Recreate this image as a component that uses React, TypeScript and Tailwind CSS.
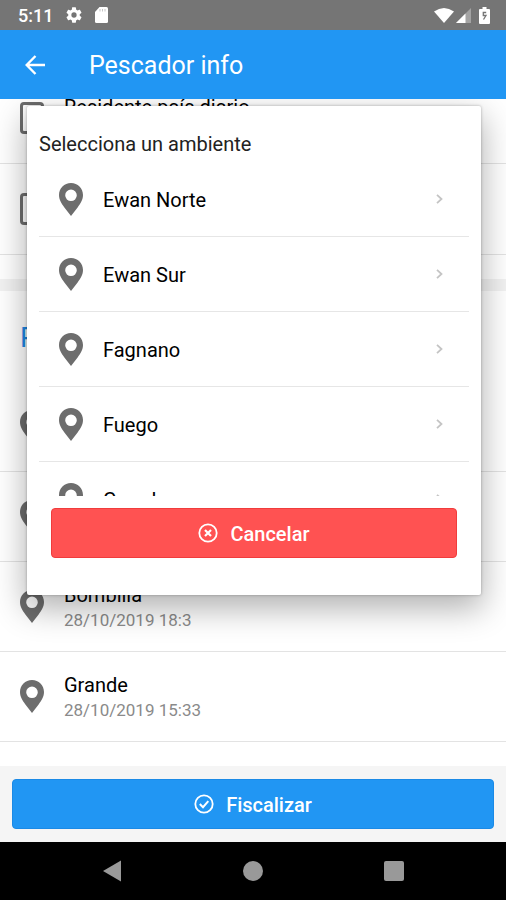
import React from 'react';

const places = ['Ewan Norte', 'Ewan Sur', 'Fagnano', 'Fuego', 'Grande'];

const visits = [
  { id: 1, name: '', date: '' },
  { id: 2, name: '', date: '' },
  { id: 3, name: 'Bombilla', date: '28/10/2019 18:3' },
  { id: 4, name: 'Grande', date: '28/10/2019 15:33' },
];

function Pin() {
  return (
    <svg viewBox="0 0 24 33" className="h-[33px] w-6 shrink-0 fill-[#6d6d6d]" aria-hidden="true">
      <path
        fillRule="evenodd"
        d="M12 0C5.2 0 0 5.3 0 12c0 5 2.600 8.400 5.200 12.200L12 33l6.800-8.800C21.400 20.400 24 17 24 12 24 5.300 18.800 0 12 0Zm0 6.500a5.800 5.800 0 1 1 0 11.600 5.800 5.800 0 0 1 0-11.600Z"
      />
    </svg>
  );
}

function StatusBar() {
  return (
    <div className="z-10 flex h-[30px] shrink-0 items-center justify-between bg-[#757575] pr-4 pl-[18px] text-white">
      <div className="flex items-center">
        <span className="w-[48px] pt-0.5 text-lg font-medium">5:11</span>
        <svg viewBox="2 2 20 20" className="h-4 w-4 fill-white" aria-hidden="true">
          <path d="M19.140 12.940c.04-.3.060-.61.060-.94s-.02-.64-.07-.94l2.030-1.580a.49.490 0 0 0 .12-.61l-1.920-3.320a.488.488 0 0 0-.59-.22l-2.390.96c-.5-.38-1.030-.7-1.620-.94l-.36-2.540a.484.484 0 0 0-.48-.41h-3.840c-.24 0-.43.170-.47.410l-.36 2.540c-.59.240-1.130.57-1.620.940l-2.390-.96c-.22-.08-.47 0-.59.220L2.740 8.870c-.12.210-.08.470.12.610l2.030 1.580c-.05.300-.09.630-.09.940s.02.640.07.940l-2.030 1.580a.49.490 0 0 0-.12.610l1.920 3.320c.12.220.37.290.59.220l2.390-.96c.5.380 1.030.7 1.620.940l.36 2.540c.05.240.24.410.48.410h3.840c.24 0 .44-.17.47-.41l.36-2.540c.59-.24 1.130-.56 1.620-.94l2.390.960c.22.080.47 0 .59-.22l1.920-3.320c.12-.22.070-.47-.12-.61l-2.010-1.580ZM12 15.300A3.300 3.300 0 1 1 12 8.700a3.300 3.300 0 0 1 0 6.600Z" />
        </svg>
        <svg viewBox="0 0 13 16" className="ml-[13px] h-4 w-[13px]" aria-hidden="true">
          <path d="M4.500 0H11.500Q13 0 13 1.500V14.500Q13 16 11.500 16H1.500Q0 16 0 14.500V5Z" fill="white" />
          <path d="M5 2v2.500M7.500 2v2.500M10 2v2.500" stroke="#c5c5c5" />
        </svg>
      </div>
      <div className="flex items-center">
        <svg viewBox="0 0 20 15" className="h-[15px] w-5" aria-hidden="true">
          <path d="M0 3.500Q10-3.500 20 3.500L10 15Z" fill="white" />
        </svg>
        <svg viewBox="0 0 15 15" className="ml-[2px] h-[15px] w-[15px]" aria-hidden="true">
          <path d="M0 15 15 0V15Z" fill="#a3a3a3" />
          <path d="M0 15 9.500 5.500V15Z" fill="white" />
        </svg>
        <svg viewBox="0 0 11 17" className="ml-2 h-[17px] w-[11px]" aria-hidden="true">
          <path d="M3.500 0h4v2H10q1 0 1 1v13q0 1-1 1H1q-1 0-1-1V3q0-1 1-1h2.500Z" fill="white" />
          <path d="M7.200 5.500H4.300V8.500H7L4.500 12.500" fill="none" stroke="#757575" strokeWidth="1.300" />
        </svg>
      </div>
    </div>
  );
}

export default function App() {
  return (
    <div className="flex h-screen flex-col overflow-hidden bg-white font-['Roboto',sans-serif] text-black">
      <StatusBar />
      <header className="z-10 flex h-[69px] shrink-0 items-center bg-[#2196f3] pl-[25px] text-white">
        <button type="button" aria-label="Volver" className="mr-[44px]">
          <svg viewBox="0 0 20 20" className="h-5 w-5" fill="none" stroke="white" strokeWidth="2.400" aria-hidden="true">
            <path d="M20 10H2M10.500 1 1.700 10l8.800 9" />
          </svg>
        </button>
        <h1 className="pt-0.5 text-[25px]">Pescador info</h1>
      </header>

      <div className="relative flex min-h-0 flex-1 flex-col">
        <main className="flex min-h-0 flex-1 flex-col justify-end overflow-hidden pb-6">
          <label className="flex h-[91px] shrink-0 items-center gap-5 border-b border-[#e3e3e3] px-5">
            <input type="checkbox" className="h-8 w-6 appearance-none rounded-sm border-[3px] border-[#6d6d6d]" />
            <span className="h-[46px] text-xl leading-[25px]">Residente país diario</span>
          </label>
          <div className="flex h-[91px] shrink-0 items-center border-b border-[#e3e3e3] px-5">
            <input
              type="checkbox"
              aria-label="Residente"
              className="h-8 w-6 appearance-none rounded-sm border-[3px] border-[#6d6d6d]"
            />
          </div>
          <div className="mt-6 h-3 shrink-0 bg-[#f2f2f2]" />
          <h2 className="flex h-[91px] shrink-0 items-center px-5 pt-0.5 text-[28px] text-[#1e88e5]">Pesca</h2>
          <ul>
            {visits.map((visit) => (
              <li key={visit.id} className="flex h-[90px] items-center gap-5 border-b border-[#e3e3e3] px-5">
                <Pin />
                <div className="pt-0.5">
                  <p className="text-xl leading-[25px]">{visit.name}</p>
                  <p className="text-[17px] leading-[25px] text-[#8a8a8a]">{visit.date}</p>
                </div>
              </li>
            ))}
          </ul>
        </main>

        <section
          role="dialog"
          aria-labelledby="dialog-title"
          className="absolute top-[7px] right-[25px] left-[27px] rounded-xs bg-white px-3 pt-[25px] pb-[37px] shadow-[0_0_3px_rgba(0,0,0,0.3),0_12px_32px_2px_rgba(0,0,0,0.3)]"
        >
          <h2 id="dialog-title" className="mb-[5px] text-xl leading-[26px] text-[#222]">
            Selecciona un ambiente
          </h2>
          <ul className="h-[334px] overflow-hidden">
            {places.map((place) => (
              <li key={place} className="border-b border-[#e6e6e6]">
                <button type="button" className="flex h-[74px] w-full items-center pr-[26px] pl-5 text-left text-xl">
                  <Pin />
                  <span className="ml-5 flex-1 pt-0.5">{place}</span>
                  <svg viewBox="0 0 7 10" className="h-[10px] w-[7px]" fill="none" stroke="#c4c4c4" strokeWidth="1.800" aria-hidden="true">
                    <path d="m1 .800 4.500 4.200L1 9.200" />
                  </svg>
                </button>
              </li>
            ))}
          </ul>
          <div className="px-3 pt-3">
            <button
              type="button"
              className="flex h-[50px] w-full items-center justify-center gap-3 rounded-sm border border-[#f03c3c] bg-[#ff5252] text-xl font-medium text-white"
            >
              <svg viewBox="0 0 20 20" className="h-5 w-5" fill="none" stroke="white" strokeWidth="1.800" aria-hidden="true">
                <circle cx="10" cy="10" r="8.700" />
                <path d="m7 7 6 6M13 7l-6 6" strokeWidth="2.200" />
              </svg>
              <span className="pt-0.5">Cancelar</span>
            </button>
          </div>
        </section>

        <footer className="shrink-0 bg-[#f5f5f5] px-3 py-[13px]">
          <button
            type="button"
            className="flex h-[50px] w-full items-center justify-center gap-3 rounded-sm border border-[#1b8ae6] bg-[#2196f3] text-xl font-medium text-white"
          >
            <svg viewBox="0 0 20 20" className="h-5 w-5" fill="none" stroke="white" strokeWidth="1.800" aria-hidden="true">
              <circle cx="10" cy="10" r="8.700" />
              <path d="m5.800 10 3.200 3.200 5.300-6" strokeWidth="2" />
            </svg>
            <span className="pt-0.5">Fiscalizar</span>
          </button>
        </footer>
      </div>

      <nav className="flex h-[58px] shrink-0 items-center justify-center gap-[121px] bg-black">
        <button type="button" aria-label="Atrás">
          <svg viewBox="0 0 20 22" className="h-[22px] w-5 fill-[#999]" aria-hidden="true">
            <path d="M19 .500v21L1 11Z" />
          </svg>
        </button>
        <button type="button" aria-label="Inicio" className="h-5 w-5 rounded-full bg-[#999]" />
        <button type="button" aria-label="Recientes" className="h-5 w-5 rounded-xs bg-[#999]" />
      </nav>
    </div>
  );
}
